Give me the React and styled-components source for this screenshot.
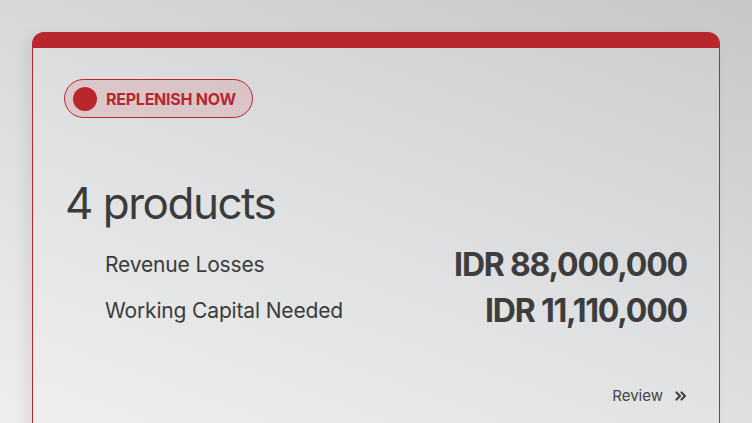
import React from 'react';
import styled, { createGlobalStyle } from 'styled-components';

const GlobalStyle = createGlobalStyle`
  html, body {
    margin: 0;
    padding: 0;
    height: 100%;
    overflow: hidden;
  }
  body {
    font-family: Inter, "Noto Sans", sans-serif;
    background: linear-gradient(200deg, #c5c7c9 0%, #d9dadb 45%, #eeeeee 100%);
  }
`;

const RED = '#b8272e';

const Page = styled.div`
  width: 752px;
  height: 423px;
  box-sizing: border-box;
  padding: 32px 32px 0;
  overflow: hidden;
`;

const Card = styled.section`
  box-sizing: border-box;
  width: 688px;
  height: 420px;
  border: 1px solid ${RED};
  border-top: 16px solid ${RED};
  border-radius: 12px;
  background: linear-gradient(200deg, rgba(205, 207, 209, 0.9) 0%, rgba(224, 225, 226, 0.9) 50%, rgba(240, 240, 240, 0.9) 100%);
  box-shadow: -6px 4px 14px rgba(0, 0, 0, 0.08);
  padding: 31px 32px 0 31px;
  display: flex;
  flex-direction: column;
`;

const Badge = styled.div`
  align-self: flex-start;
  display: flex;
  align-items: center;
  gap: 9px;
  height: 39px;
  box-sizing: border-box;
  padding: 0 16px 0 8px;
  border: 1px solid ${RED};
  border-radius: 20px;
  background: rgba(214, 70, 80, 0.15);
  color: ${RED};
  font-size: 16px;
  font-weight: 700;
  letter-spacing: -0.25px;
`;

const Dot = styled.span`
  width: 24px;
  height: 24px;
  border-radius: 50%;
  background: ${RED};
`;

const Title = styled.h1`
  margin: 56px 0 0 1px;
  font-size: 44px;
  line-height: 58px;
  font-weight: 400;
  color: #3b3b3b;
  letter-spacing: -1.5px;
`;

const Rows = styled.div`
  margin: 12px 0 0 41px;
  display: flex;
  flex-direction: column;
  gap: 6px;
`;

const Row = styled.div`
  display: flex;
  justify-content: space-between;
  align-items: center;
  height: 40px;
`;

const Label = styled.span`
  font-size: 21px;
  color: #3b3b3b;
  letter-spacing: -0.15px;
`;

const Value = styled.span`
  font-size: 32px;
  font-weight: 700;
  color: #3d3d3d;
  letter-spacing: -1.2px;
`;

const Footer = styled.div`
  margin-top: auto;
  margin-bottom: 46px;
  display: flex;
  justify-content: flex-end;
  align-items: center;
  gap: 12px;
  font-size: 15px;
  color: #444;
`;

const rows = [
  { label: 'Revenue Losses', value: 'IDR 88,000,000' },
  { label: 'Working Capital Needed', value: 'IDR 11,110,000' },
];

const Chevrons = () => (
  <svg width="12" height="12" viewBox="0 0 12 12" fill="none" stroke="#444" strokeWidth="2.2" strokeLinecap="round" strokeLinejoin="round">
    <path d="M1.5 2.5 L5 6 L1.5 9.5" />
    <path d="M6.5 2.5 L10 6 L6.5 9.5" />
  </svg>
);

export default function App() {
  return (
    <>
      <GlobalStyle />
      <Page>
        <Card>
          <Badge>
            <Dot />
            REPLENISH NOW
          </Badge>
          <Title>4 products</Title>
          <Rows>
            {rows.map((r) => (
              <Row key={r.label}>
                <Label>{r.label}</Label>
                <Value>{r.value}</Value>
              </Row>
            ))}
          </Rows>
          <Footer>
            Review
            <Chevrons />
          </Footer>
        </Card>
      </Page>
    </>
  );
}
